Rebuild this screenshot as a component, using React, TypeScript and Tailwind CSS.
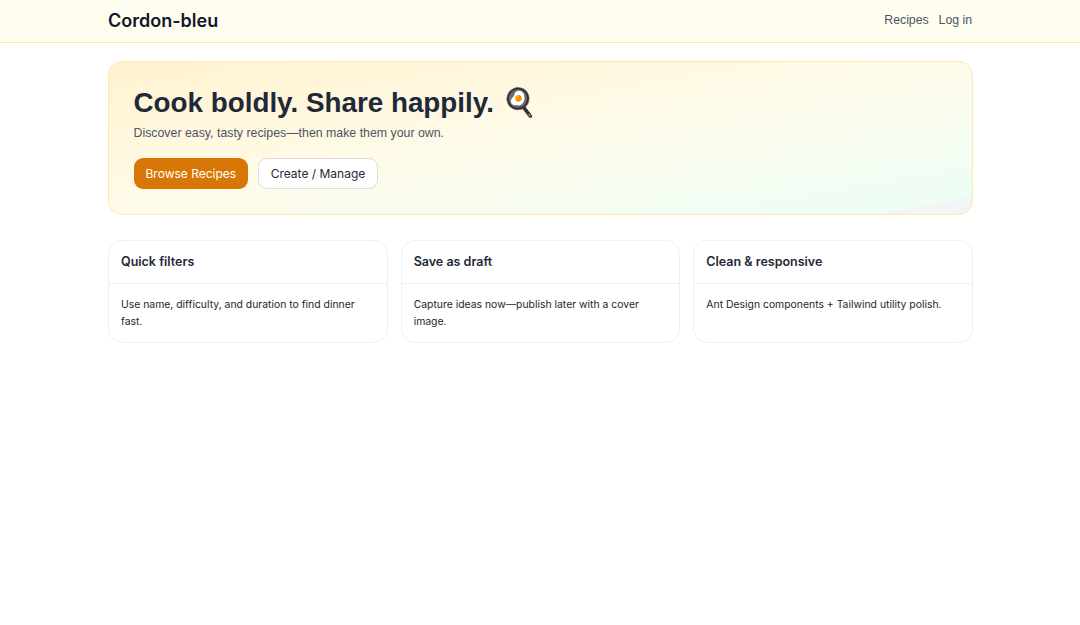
const cards = [
  { title: 'Quick filters', body: 'Use name, difficulty, and duration to find dinner fast.' },
  { title: 'Save as draft', body: 'Capture ideas now—publish later with a cover image.' },
  { title: 'Clean & responsive', body: 'Ant Design components + Tailwind utility polish.' },
];

export default function App() {
  return (
    <div className="min-h-screen bg-white font-['Inter',sans-serif]">
      <header className="h-[43px] border-b border-[#fde9a8] bg-[#fffdf0]">
        <div className="ml-[108px] flex h-[40px] w-[864px] items-center justify-between">
          <span className="text-[18px] font-semibold text-[#0f172a]">Cordon-bleu</span>
          <nav className="flex items-center gap-[10px] font-['Liberation_Sans',sans-serif] text-[12.25px] text-[#4b5563]">
            <a>Recipes</a>
            <a>Log in</a>
          </nav>
        </div>
      </header>

      <main className="ml-[108px] w-[865px] pt-[18px]">
        <section className="h-[154px] rounded-[14px] border border-[#fde9a8] bg-[linear-gradient(170deg,#fff2cf_0%,#fffbe9_48%,#effdf5_90%,#effdf5_94.5%,#f3f4f6_94.5%)] px-[24.5px] pt-[22px]">
          <h1 className="font-['Liberation_Sans',sans-serif] text-[27.8px] leading-[38px] font-bold text-[#1f2937]">
            Cook boldly. Share happily. 🍳
          </h1>
          <p className="mt-[1px] font-['Liberation_Sans',sans-serif] text-[12.35px] leading-[20px] text-[#4b5563]">
            Discover easy, tasty recipes—then make them your own.
          </p>
          <div className="mt-[15px] flex gap-[9.5px]">
            <button className="h-[31px] rounded-[9px] bg-[#d97706] px-[12px] text-[12px] text-white">Browse Recipes</button>
            <button className="h-[31px] rounded-[9px] border border-[#dddddd] bg-white px-[12px] text-[12px] text-[#1f2937]">Create / Manage</button>
          </div>
        </section>

        <div className="mt-[25px] grid grid-cols-3 gap-[13px]">
          {cards.map((card) => (
            <div key={card.title} className="h-[103px] rounded-[14px] border border-[#f0f0f0] bg-white">
              <div className="flex h-[43px] items-center border-b border-[#f0f0f0] px-[12px] text-[12.5px] font-semibold text-[#1f2937]">
                {card.title}
              </div>
              <p className="px-[12px] pt-[12px] text-[10.4px] leading-[17px] text-[#262626]">{card.body}</p>
            </div>
          ))}
        </div>
      </main>
    </div>
  );
}
